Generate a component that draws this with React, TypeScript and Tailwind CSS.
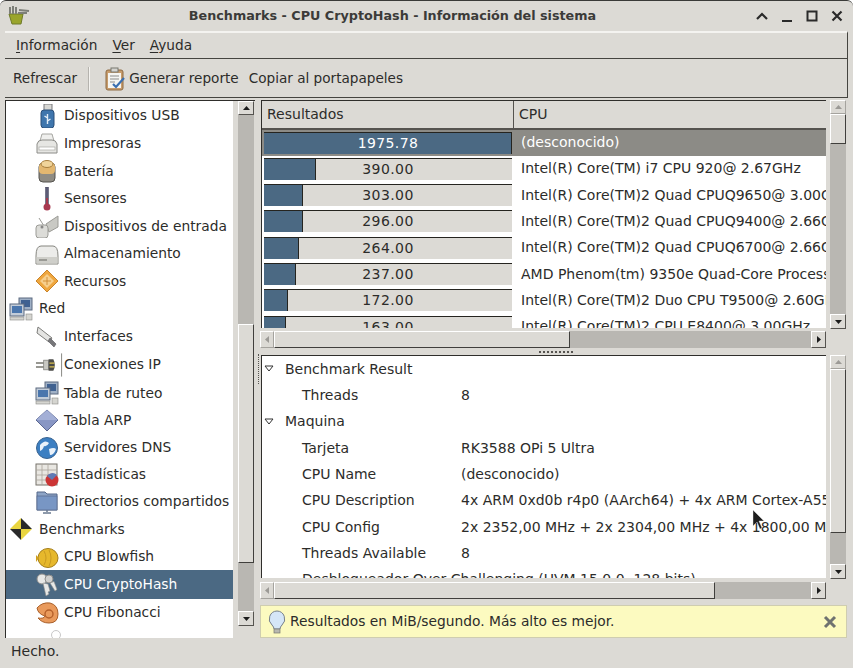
import type { ReactNode } from 'react';

const treeRows: { icon: ReactNode; label: string; top?: boolean; h: number; selected?: boolean }[] = [
  { icon: <UsbIcon />, label: 'Dispositivos USB', h: 29 },
  { icon: <PrinterIcon />, label: 'Impresoras', h: 27.5 },
  { icon: <BatteryIcon />, label: 'Batería', h: 27.5 },
  { icon: <ThermoIcon />, label: 'Sensores', h: 27.5 },
  { icon: <InputIcon />, label: 'Dispositivos de entrada', h: 27.5 },
  { icon: <DiskIcon />, label: 'Almacenamiento', h: 27.5 },
  { icon: <ResourceIcon />, label: 'Recursos', h: 27.5 },
  { icon: <NetIcon />, label: 'Red', top: true, h: 27.5 },
  { icon: <CableIcon />, label: 'Interfaces', h: 27.5 },
  { icon: <PlugIcon />, label: 'Conexiones IP', h: 29 },
  { icon: <NetIcon />, label: 'Tabla de ruteo', h: 28 },
  { icon: <ArpIcon />, label: 'Tabla ARP', h: 27 },
  { icon: <GlobeIcon />, label: 'Servidores DNS', h: 27 },
  { icon: <StatsIcon />, label: 'Estadísticas', h: 27 },
  { icon: <FolderIcon />, label: 'Directorios compartidos', h: 27.5 },
  { icon: <BenchIcon />, label: 'Benchmarks', top: true, h: 27.5 },
  { icon: <FishIcon />, label: 'CPU Blowfish', h: 27 },
  { icon: <KeysIcon />, label: 'CPU CryptoHash', h: 29, selected: true },
  { icon: <ShellIcon />, label: 'CPU Fibonacci', h: 27.5 },
];

const results = [
  { value: '1975.78', cpu: '(desconocido)', bar: 248 },
  { value: '390.00', cpu: 'Intel(R) Core(TM) i7 CPU 920@ 2.67GHz', bar: 52 },
  { value: '303.00', cpu: 'Intel(R) Core(TM)2 Quad CPUQ9650@ 3.00GHz', bar: 39 },
  { value: '296.00', cpu: 'Intel(R) Core(TM)2 Quad CPUQ9400@ 2.66GHz', bar: 39 },
  { value: '264.00', cpu: 'Intel(R) Core(TM)2 Quad CPUQ6700@ 2.66GHz', bar: 35 },
  { value: '237.00', cpu: 'AMD Phenom(tm) 9350e Quad-Core Processor', bar: 32 },
  { value: '172.00', cpu: 'Intel(R) Core(TM)2 Duo CPU T9500@ 2.60GHz', bar: 24 },
  { value: '163.00', cpu: 'Intel(R) Core(TM)2 CPU E8400@ 3.00GHz', bar: 22 },
];

const details: { label: string; value?: string; section?: boolean; long?: boolean }[] = [
  { label: 'Benchmark Result', section: true },
  { label: 'Threads', value: '8' },
  { label: 'Maquina', section: true },
  { label: 'Tarjeta', value: 'RK3588 OPi 5 Ultra' },
  { label: 'CPU Name', value: '(desconocido)' },
  { label: 'CPU Description', value: '4x ARM 0xd0b r4p0 (AArch64) + 4x ARM Cortex-A55 r2p0 (AArch64)' },
  { label: 'CPU Config', value: '2x 2352,00 MHz + 2x 2304,00 MHz + 4x 1800,00 MHz' },
  { label: 'Threads Available', value: '8' },
  { label: 'Desbloqueador Over Challenging (UVM 15.0.0, 128 bits)', long: true },
];

function UsbIcon() {
  return (
    <svg viewBox="0 0 24 24" className="h-6 w-6">
      <rect x="9" y="0" width="8" height="7" fill="#d8d8d4" stroke="#77777a" />
      <rect x="6" y="6" width="13" height="18" rx="3" fill="#3f76ad" stroke="#2b4f78" />
      <path d="M12.5 10v10M12.5 14l-3-2M12.5 17l3-2" stroke="#e3edf7" strokeWidth="1.4" fill="none" />
    </svg>
  );
}

function PrinterIcon() {
  return (
    <svg viewBox="0 0 24 24" className="h-6 w-6">
      <path d="M7 2h10l2 7H5z" fill="#efefed" stroke="#a6a6a2" />
      <path d="M2 12q1-4 5-4h10q4 0 5 4v9H2z" fill="#e6e6e3" stroke="#8c8c88" />
      <rect x="4" y="15" width="16" height="3" fill="#fff" stroke="#a8a8a4" strokeWidth="0.7" />
    </svg>
  );
}

function BatteryIcon() {
  return (
    <svg viewBox="0 0 24 24" className="h-6 w-6">
      <rect x="4" y="4" width="16" height="19" rx="4" fill="#8f8c84" stroke="#55534e" />
      <rect x="4" y="4" width="16" height="11" rx="4" fill="#e3b770" />
      <ellipse cx="12" cy="5" rx="6" ry="3.5" fill="#f0d49b" stroke="#a87f3f" />
    </svg>
  );
}

function ThermoIcon() {
  return (
    <svg viewBox="0 0 24 24" className="h-6 w-6">
      <rect x="10.5" y="0" width="3" height="18" fill="#5c5c76" stroke="#45455c" strokeWidth="0.5" />
      <rect x="11" y="11" width="2" height="8" fill="#a33a4e" />
      <circle cx="12" cy="20" r="3.5" fill="#a83a50" />
    </svg>
  );
}

function InputIcon() {
  return (
    <svg viewBox="0 0 24 24" className="h-6 w-6">
      <path d="M11 10l12-8v11l-9 5z" fill="#c9c9c4" stroke="#9b9b96" />
      <path d="M4 4l5 8" stroke="#9b9b96" fill="none" />
      <rect x="1" y="11" width="12" height="13" rx="3" fill="#dcdcd8" stroke="#9b9b96" />
      <circle cx="7" cy="13" r="1.5" fill="#888" />
    </svg>
  );
}

function DiskIcon() {
  return (
    <svg viewBox="0 0 24 24" className="h-6 w-6">
      <path d="M1 14q0-10 5-10h12q5 0 5 10v8H1z" fill="#ececea" stroke="#85857f" />
      <rect x="1.5" y="15" width="21" height="6.5" fill="#cfcfca" />
      <rect x="4" y="17" width="8" height="2" fill="#9a9a95" />
    </svg>
  );
}

function ResourceIcon() {
  return (
    <svg viewBox="0 0 24 24" className="h-6 w-6">
      <path d="M12 1l11 11-11 11L1 12z" fill="#efa73f" stroke="#c9842a" />
      <path d="M12 5l7 7-7 7-7-7z" fill="#f7cf8c" />
      <path d="M8 12h8M12 8v8" stroke="#c9842a" strokeWidth="0.8" />
    </svg>
  );
}

function NetIcon() {
  return (
    <svg viewBox="0 0 24 24" className="h-6 w-6">
      <rect x="10" y="1" width="13" height="12" fill="#9fb0c6" stroke="#5d6b80" />
      <rect x="12" y="3" width="9" height="7" fill="#3f6191" />
      <rect x="1" y="7" width="14" height="12" fill="#c2ccd8" stroke="#5d6b80" />
      <rect x="3" y="9" width="10" height="7" fill="#4a76ad" />
      <rect x="1" y="20" width="14" height="3" fill="#d5d5d0" stroke="#8a8a85" strokeWidth="0.6" />
      <rect x="17" y="17" width="6" height="6" fill="#d5d5d0" stroke="#8a8a85" strokeWidth="0.6" />
    </svg>
  );
}

function CableIcon() {
  return (
    <svg viewBox="0 0 24 24" className="h-6 w-6">
      <path d="M3 3l14 11-3 4L2 9z" fill="#e4e4e2" stroke="#7d7d7a" />
      <path d="M15 14l6 6-2 3-6-6z" fill="#77777a" stroke="#55555a" strokeWidth="0.6" />
    </svg>
  );
}

function PlugIcon() {
  return (
    <svg viewBox="0 0 30 24" className="h-6 w-[30px]">
      <path d="M1 10h8M1 14h8" stroke="#77776f" strokeWidth="1.5" />
      <rect x="9" y="7" width="5" height="10" fill="#c8c8c2" stroke="#75756f" strokeWidth="0.7" />
      <path d="M14 6h5q3 6 0 12h-5z" fill="#4b4b48" />
      <path d="M15 10h5M15 14h5" stroke="#d8c050" strokeWidth="1.4" />
      <path d="M27.5 0v24" stroke="#85857f" strokeWidth="1" />
    </svg>
  );
}

function ArpIcon() {
  return (
    <svg viewBox="0 0 24 24" className="h-6 w-6">
      <path d="M12 1l11 10-11 11L1 11z" fill="#8896c4" stroke="#5a6690" />
      <path d="M12 1l11 10H1z" fill="#a3afd6" />
    </svg>
  );
}

function GlobeIcon() {
  return (
    <svg viewBox="0 0 24 24" className="h-6 w-6">
      <circle cx="12" cy="12" r="10.5" fill="#3c7fc2" stroke="#3a6491" />
      <path d="M5 9q5-6 9-2-2 4-5 3-1 4-4 5zM14 13q5-2 7 0-2 6-6 6z" fill="#eaf2fa" />
    </svg>
  );
}

function StatsIcon() {
  return (
    <svg viewBox="0 0 24 24" className="h-6 w-6">
      <rect x="1" y="1" width="21" height="21" fill="#e9e7e2" stroke="#77736b" />
      <path d="M1 7h21M1 12h21M1 17h21M7 1v21M13 1v21" stroke="#a9a59c" strokeWidth="0.8" />
      <circle cx="17" cy="17" r="6.5" fill="#cc3535" />
      <path d="M17 17l-5-4a6.5 6.5 0 0 1 10-1z" fill="#5f7ab5" />
    </svg>
  );
}

function FolderIcon() {
  return (
    <svg viewBox="0 0 24 24" className="h-6 w-6">
      <path d="M2 2h8l2 2h10v16H2z" fill="#8da4c6" stroke="#56688a" />
      <rect x="2" y="6" width="20" height="14" fill="#7896c4" stroke="#56688a" strokeWidth="0.7" />
      <path d="M12 20v2M8 23h8" stroke="#6a7a90" strokeWidth="1.5" />
    </svg>
  );
}

function BenchIcon() {
  return (
    <svg viewBox="0 0 24 24" className="h-6 w-6">
      <path d="M12 1l11 11H12z" fill="#2a2a2a" />
      <path d="M12 1L1 12h11z" fill="#e9d540" />
      <path d="M1 12l11 11V12z" fill="#2a2a2a" />
      <path d="M23 12L12 23V12z" fill="#e9d540" />
    </svg>
  );
}

function FishIcon() {
  return (
    <svg viewBox="0 0 24 24" className="h-6 w-6">
      <ellipse cx="13" cy="13" rx="10" ry="9.5" fill="#e6b82c" stroke="#a47e1a" />
      <path d="M4 13L1 10v7z" fill="#cf9f20" />
      <path d="M9 6q4 7 0 14M14 5q4 8 0 16" stroke="#c99a20" fill="none" />
    </svg>
  );
}

function KeysIcon() {
  return (
    <svg viewBox="0 0 24 24" className="h-6 w-6">
      <circle cx="7" cy="6" r="5" fill="#e8e8e6" stroke="#8d8d8b" />
      <circle cx="14" cy="6" r="4" fill="#d0d0ce" stroke="#8d8d8b" />
      <path d="M8 10l3 13 3-2-1-2 2-1-2-7zM15 10l5 8 2-1.5-3-8z" fill="#e8e8e6" stroke="#8d8d8b" strokeWidth="0.6" />
    </svg>
  );
}

function ShellIcon() {
  return (
    <svg viewBox="0 0 24 24" className="h-6 w-6">
      <path d="M2 7q5-6 13-5 8 2 8 11 0 9-9 9-7 0-11-5 6 1 7-2-7-2-8-8z" fill="#e99a5c" stroke="#a85f2a" />
      <circle cx="14" cy="13" r="4" fill="none" stroke="#b5602a" strokeWidth="1.4" />
    </svg>
  );
}

function AppIcon() {
  return (
    <svg viewBox="0 0 24 24" className="h-6 w-6">
      <path d="M3 10h14l-2 10H6z" fill="#9aa52c" stroke="#6f7a2a" />
      <path d="M4 3v7M7 2v8M10 3v7M13 6l10 1M12 9l9 0" stroke="#7d7f78" strokeWidth="2" fill="none" />
    </svg>
  );
}

function ArrowBtn({ dir, className = '', off = false }: { dir: 'up' | 'down' | 'left' | 'right'; className?: string; off?: boolean }) {
  const points = {
    up: '1,6 4.5,2 8,6',
    down: '1,3 8,3 4.5,7',
    left: '6,1 6,8 2,4.5',
    right: '3,1 3,8 7,4.5',
  }[dir];
  return (
    <div className={`flex shrink-0 items-center justify-center border-t border-l border-t-white border-l-white border-r border-b ${off ? 'border-r-[#a5a39e] border-b-[#a5a39e]' : 'border-r-[#55534f] border-b-[#55534f]'} bg-[#dcdad5] ${className}`}>
      <svg viewBox="0 0 9 9" className="h-[9px] w-[9px]">
        <polygon points={points} fill={off ? '#9c9a96' : '#1c1c1c'} />
      </svg>
    </div>
  );
}

function VScroll({ before, thumb, height, upOff = false }: { before: number; thumb: number; height: number; upOff?: boolean }) {
  return (
    <div className="flex w-4 shrink-0 flex-col bg-[#b9b7b2]" style={{ height }}>
      <ArrowBtn dir="up" off={upOff} className="h-[14px] w-4" />
      <div className="shrink-0" style={{ height: before }} />
      <div className="w-4 shrink-0 border-t border-l border-t-white border-l-white border-r border-b border-r-[#403f3c] border-b-[#403f3c] bg-[#dcdad5]" style={{ height: thumb }} />
      <div className="flex-1" />
      <ArrowBtn dir="down" className="h-[15px] w-4" />
    </div>
  );
}

function HScroll({ thumb }: { thumb: number }) {
  return (
    <div className="-ml-px flex h-[17px] w-[566px] bg-[#b9b7b2]">
      <ArrowBtn dir="left" off className="h-[17px] w-[14px]" />
      <div className="h-[17px] shrink-0 border-t border-l border-t-white border-l-white border-r border-b border-r-[#403f3c] border-b-[#403f3c] bg-[#dcdad5]" style={{ width: thumb }} />
      <div className="flex-1" />
      <ArrowBtn dir="right" className="h-[17px] w-[15px]" />
    </div>
  );
}

function Underlined({ first, rest }: { first: string; rest: string }) {
  return (
    <span>
      <span className="underline underline-offset-2">{first}</span>
      {rest}
    </span>
  );
}

export default function App() {
  return (
    <div className="relative flex h-[668px] w-[853px] flex-col overflow-hidden rounded-t-[6px] border-t border-[#3a3a38] bg-[#dcdad5] text-[14px] text-[#2c2c2a] [font-family:'DejaVu_Sans',sans-serif]">
      {/* title bar */}
      <div className="flex h-[30px] shrink-0 items-center pl-[6px] pr-[9px]">
        <AppIcon />
        <div className="flex-1 text-center text-[12.75px] font-bold text-[#3b3b39]">
          Benchmarks - CPU CryptoHash - Información del sistema
        </div>
        <div className="flex items-center gap-[11px]">
          <svg viewBox="0 0 14 14" className="h-[14px] w-[14px]">
            <path d="M2 10l5-5 5 5" stroke="#2a2a2a" strokeWidth="2.2" fill="none" />
          </svg>
          <svg viewBox="0 0 14 14" className="h-[14px] w-[14px]">
            <path d="M2 12h10" stroke="#2a2a2a" strokeWidth="2" fill="none" />
          </svg>
          <svg viewBox="0 0 14 14" className="h-[14px] w-[14px]">
            <rect x="2.5" y="2.5" width="9" height="9" stroke="#2a2a2a" strokeWidth="2" fill="none" />
          </svg>
          <svg viewBox="0 0 14 14" className="h-[14px] w-[14px]">
            <path d="M2.5 2.5l9 9M11.5 2.5l-9 9" stroke="#2a2a2a" strokeWidth="2.2" fill="none" />
          </svg>
        </div>
      </div>

      <div className="flex flex-1 flex-col px-[5px]">
        {/* menu */}
        <div className="flex h-[28px] shrink-0 items-center gap-[15px] border-t-2 border-b border-r border-t-[#f4f3f0] border-b-[#45443f] border-r-[#45443f] pb-[1px] pl-[11px] text-[13.7px]">
          <Underlined first="I" rest="nformación" />
          <Underlined first="V" rest="er" />
          <Underlined first="A" rest="yuda" />
        </div>

        {/* toolbar */}
        <div className="flex h-[39px] shrink-0 items-center border-b border-r border-b-[#45443f] border-r-[#45443f] pt-[1px] pl-[8px] text-[13.6px]">
          <span>Refrescar</span>
          <div className="mx-[11px] h-[24px] w-[2px] border-l border-r border-l-[#b5b3ae] border-r-[#f4f3f0]" />
          <svg viewBox="0 0 24 24" className="ml-[2px] h-6 w-6">
            <rect x="3" y="3" width="17" height="20" rx="2" fill="#c79c6c" stroke="#8e6a42" />
            <rect x="5" y="6" width="13" height="15" fill="#f5f5f2" />
            <rect x="8" y="1" width="7" height="4" fill="#d4d4d0" stroke="#77776f" />
            <path d="M7 9h9M7 12h9M7 15h5" stroke="#8d8d8a" />
            <path d="M10 17l3 3 8-9" stroke="#3a6fb0" strokeWidth="2.2" fill="none" />
          </svg>
          <span className="ml-[2px]">Generar reporte</span>
          <span className="ml-[10px]">Copiar al portapapeles</span>
        </div>

        {/* panes */}
        <div className="flex h-[540px] shrink-0 pt-[2px]">
          {/* left tree */}
          <div className="flex h-[538px] w-[250px] shrink-0 border-l border-t border-[#2f2e2b]">
            <div className="h-full w-[227px] shrink-0 overflow-hidden bg-white text-[13.8px]">
              {treeRows.map((row) => (
                <div
                  key={row.label}
                  className={`flex items-center ${row.top ? 'pl-[3px]' : 'pl-[29px]'} ${row.selected ? 'bg-[#4b6983] text-white' : ''}`}
                  style={{ height: row.h }}
                >
                  <div className={`flex shrink-0 justify-start ${row.top ? 'w-[30px]' : 'w-[29px]'}`}>{row.icon}</div>
                  <span className="whitespace-nowrap">{row.label}</span>
                </div>
              ))}
              <div className="flex h-[28px] items-start pl-[45px]">
                <div className="mt-[3px] h-[10px] w-[10px] rounded-full border border-[#c8c8c8]" />
              </div>
            </div>
            <div className="ml-[5px]">
              <VScroll before={209} thumb={239} height={525} />
            </div>
          </div>

          <div className="flex w-[6px] shrink-0 items-center justify-center">
            <div className="h-[30px] w-0 border-l border-dotted border-[#55534f]" />
          </div>

          {/* right */}
          <div className="flex w-[587px] shrink-0 flex-col">
            {/* results table */}
            <div className="flex h-[229px] shrink-0">
              <div className="h-[228px] w-[565px] shrink-0 overflow-hidden border-l border-t border-[#2f2e2b] bg-white">
                <div className="flex h-[28.5px] border-b-2 border-b-[#55534f] bg-[#dcdad5]">
                  <div className="flex w-[252px] items-center border-r border-r-[#55534f] pt-[1px] pl-[5px]">Resultados</div>
                  <div className="flex flex-1 items-center pt-[1px] pl-[5px]">CPU</div>
                </div>
                {results.map((row, i) => (
                  <div key={row.value} className={`flex h-[26.33px] ${i === 0 ? 'bg-[#8c8b86] text-white' : ''}`}>
                    <div className="w-[252px] shrink-0 pt-[2px] pl-[2px] pr-[2px]">
                      <div className="relative flex h-[22px] items-center justify-center border-t border-t-[#25241f] bg-[#dcdad5]">
                        <div className="absolute top-0 bottom-0 left-0 border-r border-r-[#25241f] bg-[#4b6983]" style={{ width: row.bar }} />
                        <span className={`relative tracking-[0.4px] ${i === 0 ? 'text-white' : ''}`}>{row.value}</span>
                      </div>
                    </div>
                    <div className="flex min-w-0 flex-1 items-center overflow-hidden pl-[7px] whitespace-nowrap">{row.cpu}</div>
                  </div>
                ))}
              </div>
              <div className="ml-[4px]">
                <VScroll upOff before={0} thumb={30} height={229} />
              </div>
            </div>

            <div className="mt-[2px]">
              <HScroll thumb={296} />
            </div>

            {/* handle */}
            <div className="flex h-[7px] shrink-0 items-center pl-[278px]">
              <div className="h-0 w-[34px] border-t-2 border-dotted border-[#55534f]" />
            </div>

            {/* details */}
            <div className="flex h-[224px] shrink-0">
              <div className="h-[223px] w-[565px] shrink-0 overflow-hidden border-l border-t border-[#2f2e2b] bg-white">
                {details.map((row) => (
                  <div key={row.label} className="flex h-[26.33px] items-center whitespace-nowrap">
                    {row.section ? (
                      <>
                        <svg viewBox="0 0 10 10" className="ml-[2px] mr-[11px] h-[10px] w-[10px]">
                          <polygon points="1,2 9,2 5,7" fill="#fff" stroke="#333" />
                        </svg>
                        <span>{row.label}</span>
                      </>
                    ) : row.long ? (
                      <span className="pl-[40px]">{row.label}</span>
                    ) : (
                      <>
                        <span className="w-[199px] shrink-0 pl-[40px]">{row.label}</span>
                        <span>{row.value}</span>
                      </>
                    )}
                  </div>
                ))}
              </div>
              <div className="ml-[4px]">
                <VScroll upOff before={0} thumb={164} height={224} />
              </div>
            </div>

            <div className="mt-[3px]">
              <HScroll thumb={441} />
            </div>

            {/* info bar */}
            <div className="-ml-px mt-[6px] flex h-[33px] w-[587px] shrink-0 items-center border border-[#cfcdb0] bg-[#fcfac0] pl-[4px] pr-[9px]">
              <svg viewBox="0 0 24 24" className="h-6 w-6">
                <path d="M12 1a8 8 0 0 0-5 14q2 2 2 4h6q0-2 2-4a8 8 0 0 0-5-14z" fill="#d5e6f7" stroke="#77808a" />
                <rect x="9" y="19" width="6" height="4" fill="#b8b8b0" stroke="#77776f" strokeWidth="0.7" />
              </svg>
              <span className="ml-[1px] flex-1 text-[13.8px]">Resultados en MiB/segundo. Más alto es mejor.</span>
              <svg viewBox="0 0 14 14" className="h-[14px] w-[14px]">
                <path d="M2 2l10 10M12 2L2 12" stroke="#6f7270" strokeWidth="3" />
              </svg>
            </div>
          </div>
        </div>

        {/* status */}
        <div className="flex h-[26px] shrink-0 items-center pl-[6px]">Hecho.</div>
      </div>

      {/* mouse pointer */}
      <svg viewBox="0 0 14 22" className="absolute top-[508px] left-[752px] h-[22px] w-[14px]">
        <path d="M1 1v16l4-4 3 7 2-1-3-7h5z" fill="#1e1e1e" stroke="#eee" strokeWidth="0.4" />
      </svg>
    </div>
  );
}
